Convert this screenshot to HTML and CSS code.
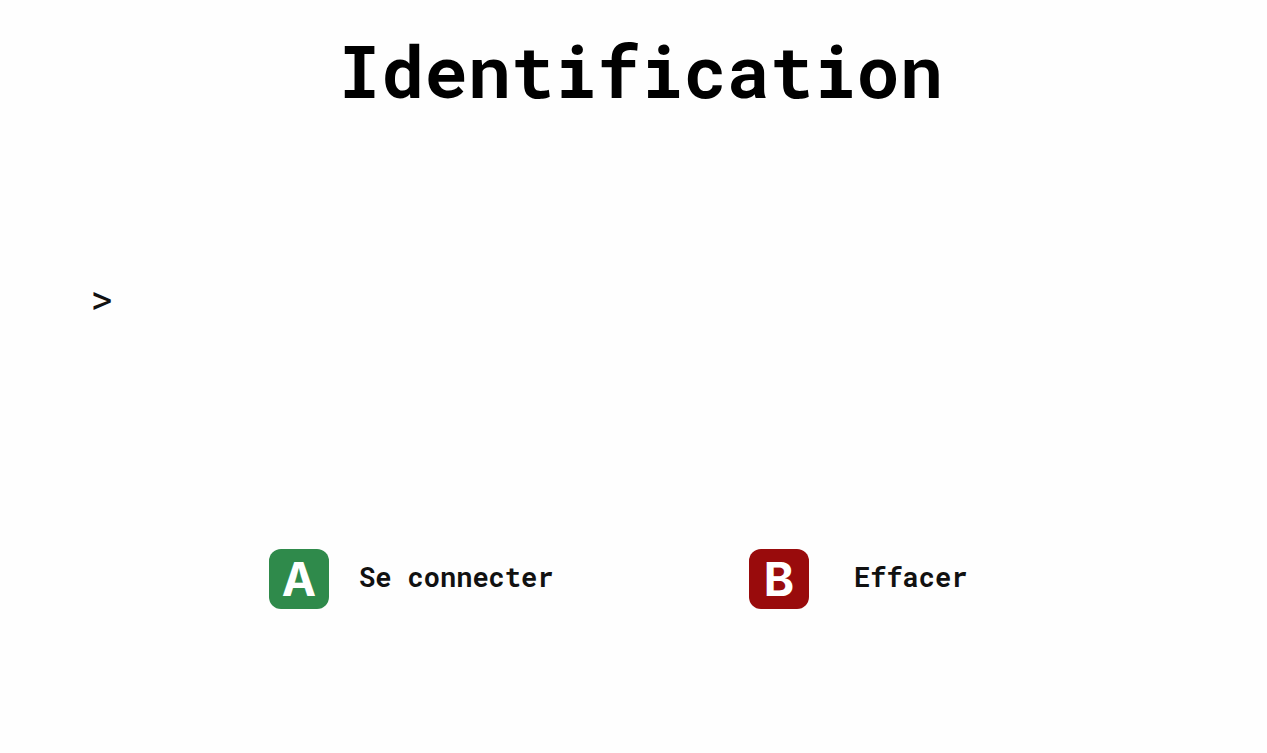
FILE: index.html
```html
<!DOCTYPE html>
<html lang="fr">
<head>
    <meta charset="UTF-8">
    <meta name="viewport" content="width=device-width, initial-scale=1.0">
    <title>Identification</title>
    <link rel="stylesheet" href="styles.css">
</head>
<body>
    <h1 class="title">Identification</h1>

    <form class="login" id="loginForm">
        <div class="prompt">
            <label for="code">&gt;</label>
            <input type="text" id="code" class="prompt-input" autocomplete="off">
        </div>

        <div class="actions">
            <button type="submit" class="action">
                <span class="key key-a">A</span>
                <span class="action-text">Se connecter</span>
            </button>
            <button type="reset" class="action action-clear">
                <span class="key key-b">B</span>
                <span class="action-text">Effacer</span>
            </button>
        </div>
    </form>
</body>
</html>
```
FILE: styles.css
```css
* {
    box-sizing: border-box;
}

body {
    margin: 0;
    padding: 23px 0 0;
    background-color: #fefefe;
    color: #111;
    font-family: "Roboto Mono", "DejaVu Sans Mono", monospace;
}

.title {
    margin: 0;
    padding-left: 14px;
    color: #000;
    font-size: 72px;
    line-height: 96px;
    text-align: center;
}

.prompt {
    display: flex;
    align-items: center;
    margin: 160px 90px 0;
    font-size: 40px;
    line-height: 40px;
}

.prompt-input {
    flex: 1;
    height: 40px;
    margin-left: 16px;
    padding: 0;
    border: none;
    outline: none;
    background: none;
    font: inherit;
}

.actions {
    display: grid;
    grid-template-columns: 480px auto;
    justify-content: start;
    margin-top: 230px;
    padding-left: 269px;
}

.action {
    display: flex;
    align-items: center;
    gap: 30px;
    padding: 0;
    border: none;
    background: none;
    color: inherit;
    font: bold 27px/40px "Roboto Mono", "DejaVu Sans Mono", monospace;
    cursor: pointer;
}

.action-clear {
    gap: 45px;
}

.action-text {
    padding-bottom: 4px;
}

.key {
    width: 60px;
    height: 60px;
    border-radius: 12px;
    color: white;
    font: bold 46px/60px Inter, Arial, sans-serif;
    text-align: center;
}

.key-a {
    background-color: #2f8a4b;
}

.key-b {
    background-color: #990b0c;
}
```
